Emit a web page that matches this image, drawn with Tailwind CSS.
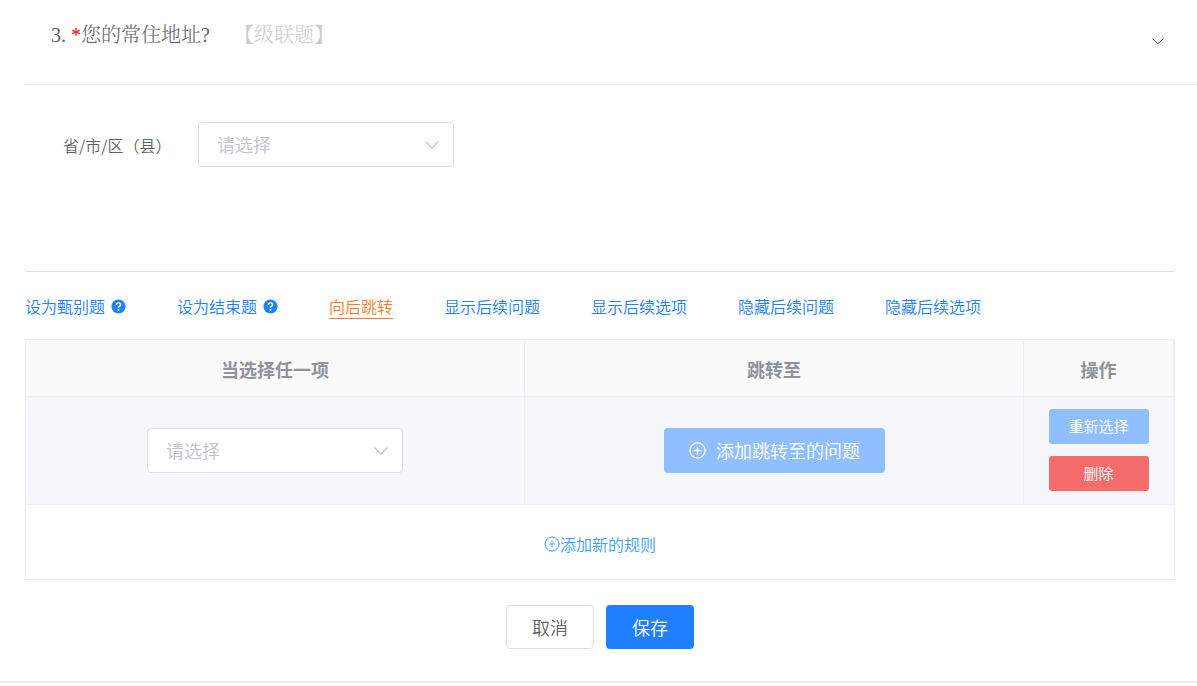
<!DOCTYPE html>
<html lang="zh-CN">
<head>
<meta charset="utf-8">
<meta name="viewport" content="width=device-width, initial-scale=1">
<title>题目逻辑设置</title>
<script src="https://cdn.jsdelivr.net/npm/@tailwindcss/browser@4"></script>
</head>
<body class="bg-white font-[350] font-['Noto_Sans_CJK_SC',sans-serif] text-[#606266]">
<main class="border-b-2 border-[#ebeef5] pb-8 pl-[25px]">
  <header class="flex h-[85px] items-start justify-between border-b border-[#ebeef5] pr-8 pl-[26px]">
    <h1 class="flex pt-[21px] text-[20px] leading-7 font-light font-['Liberation_Serif','Noto_Serif_CJK_SC','Noto_Sans_CJK_SC',serif]">
      <span class="w-5">3.</span><span class="w-[10px] text-center text-[#ff0000]">*</span><span>您的常住地址?</span>
      <span class="ml-6 text-[#cccccc]">【级联题】</span>
    </h1>
    <button type="button" aria-label="收起" class="mt-[34px] text-[#7a4a48]">
      <svg class="size-[14px]" viewBox="0 0 14 14" fill="none" stroke="currentColor" stroke-width="1"><path d="M1.5 4.5 7 9.8 12.5 4.5"/></svg>
    </button>
  </header>

  <div class="pr-[22px]">
    <section class="flex h-[187px] items-start border-b border-[#dcdfe6] pt-[37px] pl-[38px]">
      <label for="region" class="w-[135px] pt-[11px] text-[16px] leading-6">省/市/区（县）</label>
      <div class="relative w-64">
        <select id="region" class="h-[45px] w-full appearance-none rounded border border-[#dcdfe6] bg-white px-[18px] text-[18px] text-[#c0c4cc]">
          <option>请选择</option>
        </select>
        <svg class="pointer-events-none absolute top-[15px] right-[14px] h-4 w-4 text-[#c0c4cc]" viewBox="0 0 16 16" fill="none" stroke="currentColor" stroke-width="1.4" stroke-linecap="round"><path d="M2 5 8 11 14 5"/></svg>
      </div>
    </section>

    <nav class="flex h-[67px] items-start gap-[51px] pt-[22px] text-[16px] leading-6 text-[#2080ff]">
      <a href="#" class="flex items-center gap-[6px]">设为甄别题
        <svg class="size-[15px]" viewBox="0 0 14 14"><circle cx="7" cy="7" r="6.6" fill="currentColor"/><path d="M5 5.6C5 4.3 5.9 3.6 7 3.6s2 .7 2 1.8C9 6.7 7 6.7 7 8.2" fill="none" stroke="#fff" stroke-width="1.3"/><circle cx="7" cy="10.2" r=".9" fill="#fff"/></svg>
      </a>
      <a href="#" class="flex items-center gap-[6px]">设为结束题
        <svg class="size-[15px]" viewBox="0 0 14 14"><circle cx="7" cy="7" r="6.6" fill="currentColor"/><path d="M5 5.6C5 4.3 5.9 3.6 7 3.6s2 .7 2 1.8C9 6.7 7 6.7 7 8.2" fill="none" stroke="#fff" stroke-width="1.3"/><circle cx="7" cy="10.2" r=".9" fill="#fff"/></svg>
      </a>
      <a href="#" aria-current="page" class="border-b border-[#ff7a22] text-[#ff7a22]">向后跳转</a>
      <a href="#">显示后续问题</a>
      <a href="#">显示后续选项</a>
      <a href="#">隐藏后续问题</a>
      <a href="#">隐藏后续选项</a>
    </nav>

    <div class="border border-[#ebeef5]">
      <table class="w-full table-fixed border-separate border-spacing-0">
        <thead>
          <tr class="h-[57px] bg-[#fafafa] text-[18px] leading-6 text-[#909399]">
            <th scope="col" class="border-r border-b border-[#ebeef5] pt-[2px]">当选择任一项</th>
            <th scope="col" class="border-r border-b border-[#ebeef5] pt-[2px]">跳转至</th>
            <th scope="col" class="w-[150px] border-r border-b border-[#ebeef5] pt-[2px]">操作</th>
          </tr>
        </thead>
        <tbody>
          <tr class="bg-[#f5f7fb]">
            <td class="border-r border-b border-[#ebeef5]">
              <div class="relative mx-auto w-64">
                <select aria-label="当选择任一项" class="block h-[45px] w-full appearance-none rounded border border-[#dcdfe6] bg-white px-[18px] text-[18px] text-[#c0c4cc]">
                  <option>请选择</option>
                </select>
                <svg class="pointer-events-none absolute top-[15px] right-[14px] h-4 w-4 text-[#c0c4cc]" viewBox="0 0 16 16" fill="none" stroke="currentColor" stroke-width="1.4" stroke-linecap="round"><path d="M2 5 8 11 14 5"/></svg>
              </div>
            </td>
            <td class="border-r border-b border-[#ebeef5]">
              <button type="button" class="mx-auto flex h-[45px] w-[221px] items-center justify-center gap-[10px] rounded bg-[#90bfff] text-[18px] text-white">
                <svg class="size-[18px]" viewBox="0 0 18 18" fill="none" stroke="currentColor" stroke-width="1.3" stroke-linecap="round"><circle cx="9.5" cy="8.5" r="7.6"/><path d="M6.2 8.5h6.6M9.5 5.2v6.6"/></svg>
                添加跳转至的问题
              </button>
            </td>
            <td class="border-r border-b border-[#ebeef5] pt-3 pb-[13px]">
              <div class="flex flex-col items-center gap-3 text-[15px] text-white">
                <button type="button" class="h-[35px] w-[100px] rounded-[3px] bg-[#90bfff]">重新选择</button>
                <button type="button" class="h-[35px] w-[100px] rounded-[3px] bg-[#f56c6c]">删除</button>
              </div>
            </td>
          </tr>
        </tbody>
      </table>
      <div class="flex h-[74px] items-center justify-center pt-1">
        <button type="button" class="flex items-center text-[16px] leading-6 text-[#409eff]">
          <svg class="size-4" viewBox="0 0 16 16" fill="none" stroke="currentColor" stroke-width="1" stroke-linecap="round"><circle cx="8" cy="8" r="7"/><path d="M5 8h6M8 5v6"/></svg>
          添加新的规则
        </button>
      </div>
    </div>

    <div class="flex justify-center gap-3 pt-[25px] text-[18px]">
      <button type="button" class="h-11 w-[88px] rounded border border-[#dcdfe6] bg-white">取消</button>
      <button type="button" class="h-11 w-[88px] rounded bg-[#2080ff] text-white">保存</button>
    </div>
  </div>
</main>
</body>
</html>
